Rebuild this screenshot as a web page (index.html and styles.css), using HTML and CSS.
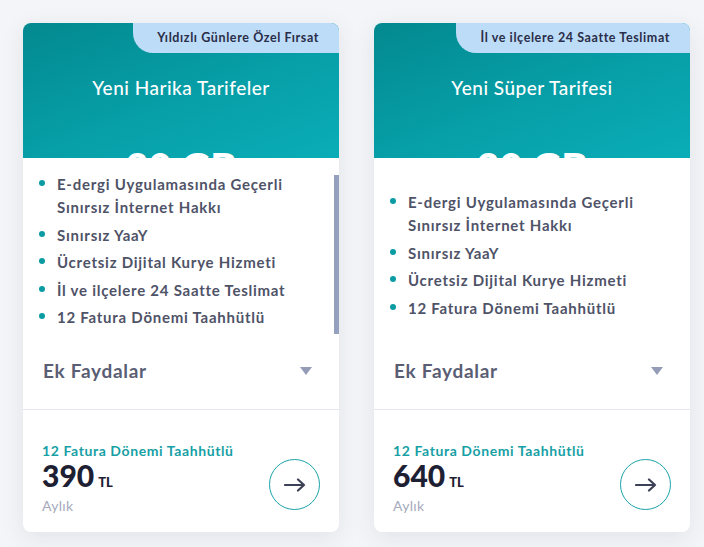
FILE: index.html
```html
<!DOCTYPE html>
<html lang="tr">
<head>
    <meta charset="UTF-8" />
    <title>Tarifeler</title>
    <link rel="stylesheet" href="styles.css">
</head>
<body>
    <div class="cards">
        <div class="card">
            <div class="card-head">
                <span class="badge">Yıldızlı Günlere Özel Fırsat</span>
                <h3 class="title">Yeni Harika Tarifeler</h3>
                <div class="quota">30 GB</div>
            </div>
            <div class="features scrolled">
                <ul>
                    <li>E-dergi Uygulamasında Geçerli Sınırsız İnternet Hakkı</li>
                    <li>Sınırsız YaaY</li>
                    <li>Ücretsiz Dijital Kurye Hizmeti</li>
                    <li>İl ve ilçelere 24 Saatte Teslimat</li>
                    <li>12 Fatura Dönemi Taahhütlü</li>
                </ul>
            </div>
            <div class="extra">
                <span>Ek Faydalar</span>
                <span class="caret"></span>
            </div>
            <div class="card-foot">
                <div class="price-info">
                    <div class="term">12 Fatura Dönemi Taahhütlü</div>
                    <div class="price">390<small>TL</small></div>
                    <div class="period">Aylık</div>
                </div>
                <button class="go-btn" aria-label="Devam">
                    <svg width="22" height="14" viewBox="0 0 22 14">
                        <path d="M1 7H20M14 1.5L20 7L14 12.5" fill="none" stroke="#3d4156" stroke-width="2.2" stroke-linecap="round" stroke-linejoin="round"/>
                    </svg>
                </button>
            </div>
        </div>

        <div class="card">
            <div class="card-head">
                <span class="badge">İl ve ilçelere 24 Saatte Teslimat</span>
                <h3 class="title">Yeni Süper Tarifesi</h3>
                <div class="quota">30 GB</div>
            </div>
            <div class="features short">
                <ul>
                    <li>E-dergi Uygulamasında Geçerli Sınırsız İnternet Hakkı</li>
                    <li>Sınırsız YaaY</li>
                    <li>Ücretsiz Dijital Kurye Hizmeti</li>
                    <li>12 Fatura Dönemi Taahhütlü</li>
                </ul>
            </div>
            <div class="extra">
                <span>Ek Faydalar</span>
                <span class="caret"></span>
            </div>
            <div class="card-foot">
                <div class="price-info">
                    <div class="term">12 Fatura Dönemi Taahhütlü</div>
                    <div class="price">640<small>TL</small></div>
                    <div class="period">Aylık</div>
                </div>
                <button class="go-btn" aria-label="Devam">
                    <svg width="22" height="14" viewBox="0 0 22 14">
                        <path d="M1 7H20M14 1.5L20 7L14 12.5" fill="none" stroke="#3d4156" stroke-width="2.2" stroke-linecap="round" stroke-linejoin="round"/>
                    </svg>
                </button>
            </div>
        </div>
    </div>
</body>
</html>
```

FILE: styles.css
```css
body {
    margin: 0;
    padding: 23px 14px 23px 23px;
    font-family: 'Lato', 'Noto Sans', sans-serif;
    background-color: #f4f5f8;
}

.cards {
    display: flex;
    gap: 35px;
}

.card {
    flex: none;
    width: 316px;
    background-color: #fff;
    border-radius: 8px;
    overflow: hidden;
    box-shadow: 0 6px 24px rgba(40, 50, 90, 0.09);
}

.card-head {
    position: relative;
    height: 135px;
    overflow: hidden;
    text-align: center;
    color: #fff;
    background: linear-gradient(160deg, #03898f 0%, #079fa8 55%, #0aadb7 100%);
}

.badge {
    position: absolute;
    top: 0;
    right: 0;
    height: 30px;
    line-height: 30px;
    padding: 0 20px 0 24px;
    background-color: #bcdcf8;
    color: #2a2d48;
    font-size: 12.5px;
    font-weight: 700;
    letter-spacing: 0.6px;
    border-bottom-left-radius: 20px;
}

.title {
    margin: 0;
    padding-top: 53px;
    font-size: 19px;
    line-height: 24px;
    font-weight: 500;
    letter-spacing: 0.5px;
}

.quota {
    margin-top: 47px;
    font-size: 40px;
    line-height: 40px;
    font-weight: 900;
}

.features {
    position: relative;
    height: 184px;
    box-sizing: border-box;
    padding: 15px 20px 0 16px;
    overflow: hidden;
}

.features.short {
    padding-top: 33px;
}

.features.scrolled::after {
    content: "";
    position: absolute;
    top: 17px;
    right: 0;
    width: 5px;
    height: 159px;
    background-color: #95a0be;
}

.features ul {
    list-style: none;
    margin: 0;
    padding: 0;
}

.features li {
    display: flex;
    gap: 12px;
    margin-bottom: 4.5px;
    font-size: 15px;
    line-height: 23px;
    font-weight: 700;
    letter-spacing: 0.75px;
    color: #4f5368;
}

.features li::before {
    content: "";
    flex: none;
    width: 6px;
    height: 6px;
    margin-top: 7px;
    border-radius: 50%;
    background-color: #0a9ba3;
}

.extra {
    display: flex;
    justify-content: space-between;
    align-items: center;
    padding: 17px 27px 26px 20px;
    border-bottom: 1px solid #e5e6ee;
    font-size: 19px;
    line-height: 24px;
    font-weight: 700;
    letter-spacing: 0.7px;
    color: #5a5e74;
}

.caret {
    width: 0;
    height: 0;
    border-left: 6.5px solid transparent;
    border-right: 6.5px solid transparent;
    border-top: 8px solid #949cb8;
}

.card-foot {
    display: flex;
    justify-content: space-between;
    align-items: flex-end;
    padding: 32px 19px 17px 19px;
}

.term {
    font-size: 14px;
    line-height: 18px;
    font-weight: 700;
    letter-spacing: 0.6px;
    color: #179fa6;
}

.price {
    font-size: 30px;
    line-height: 30px;
    font-weight: 900;
    color: #1d2033;
}

    .price small {
        margin-left: 4px;
        font-size: 13px;
        line-height: 1;
        font-weight: 900;
    }

.period {
    margin-top: 7px;
    font-size: 14px;
    line-height: 18px;
    letter-spacing: 0.3px;
    color: #a6aabd;
}

.go-btn {
    display: flex;
    align-items: center;
    justify-content: center;
    width: 51px;
    height: 51px;
    margin-bottom: 5px;
    padding: 0;
    border: 1px solid #1aa3a8;
    border-radius: 50%;
    background-color: #fff;
    cursor: pointer;
}
```
